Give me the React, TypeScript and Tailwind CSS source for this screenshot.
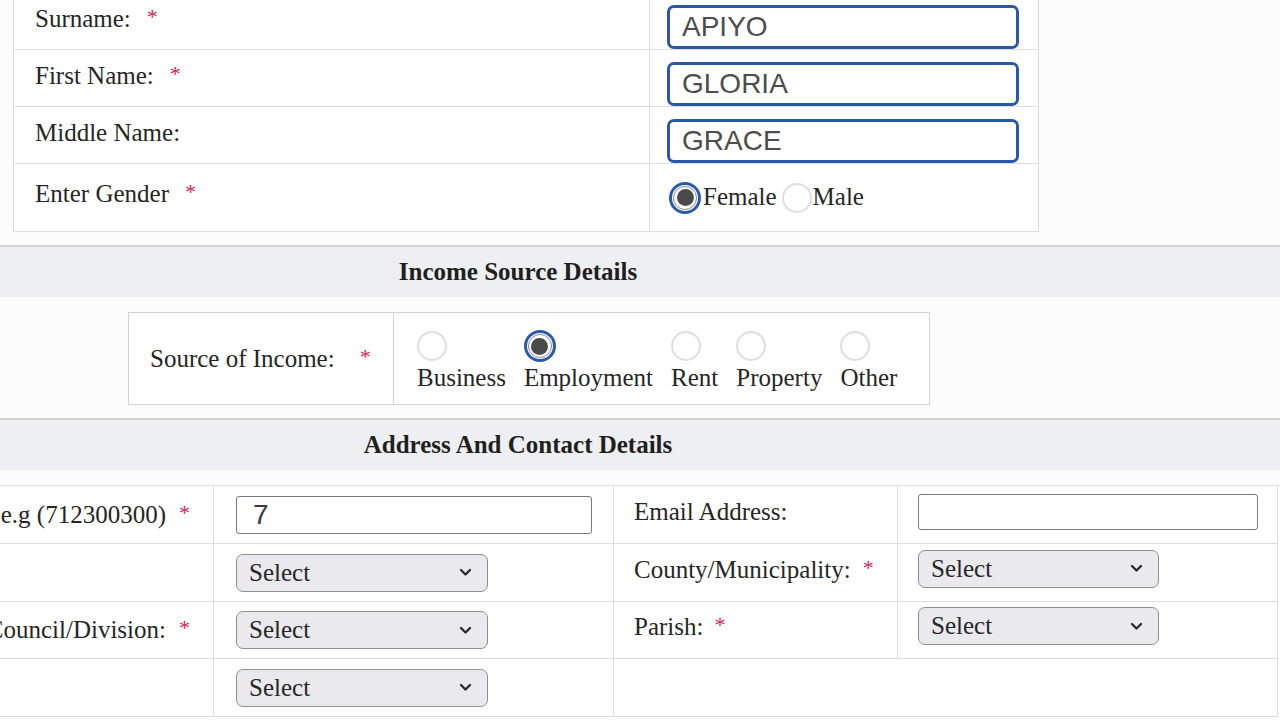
import React from "react";

const SERIF = "font-['Liberation_Serif','Times_New_Roman',serif]";

function Star({ gap = "ml-[16px]" }: { gap?: string }) {
  return <span className={`${gap} relative top-[-2px] text-[#d3235a] text-[22px] leading-none`}>*</span>;
}

function Radio({ checked = false }: { checked?: boolean }) {
  if (checked) {
    return (
      <span className="block w-[32px] h-[32px] rounded-full border-[3px] border-[#2c5aa9] bg-white flex items-center justify-center shrink-0">
        <span className="w-[24px] h-[24px] rounded-full border-[1px] border-[#8a8a8a] bg-white flex items-center justify-center">
          <span className="block w-[17px] h-[17px] rounded-full bg-[#4a4a4a]" />
        </span>
      </span>
    );
  }
  return <span className="block w-[30px] h-[30px] rounded-full border-2 border-[#dedede] bg-white shrink-0" />;
}

function Chevron() {
  return (
    <svg width="13" height="9" viewBox="0 0 13 9" fill="none">
      <polyline points="2,2 6.5,6.5 11,2" stroke="#2a2a2a" strokeWidth="2.3" strokeLinecap="round" strokeLinejoin="round" />
    </svg>
  );
}

function SelectBox({ width = "w-[252px]" }: { width?: string }) {
  return (
    <div className={`${width} h-[38px] rounded-[7px] bg-[#e9e9ee] border border-[#8f8f8f] flex items-center justify-between pl-[12px] pr-[15px]`}>
      <span className="text-[25px] text-[#262626]">Select</span>
      <Chevron />
    </div>
  );
}

function NameRow({ label, value, required }: { label: string; value: string; required?: boolean }) {
  return (
    <div className="flex h-[57px] border-b border-[#dcdcdc]">
      <div className="w-[636px] border-r border-[#dcdcdc] flex items-center pl-[21px] pb-[4px]">
        <span>{label}</span>
        {required && <Star />}
      </div>
      <div className="flex-1 flex items-start pt-[12px] pl-[17px]">
        <input
          readOnly
          value={value}
          className="w-[352px] h-[44px] border-[3px] border-[#2b58a6] rounded-[7px] bg-white pl-[12px] font-['Liberation_Sans',Arial,sans-serif] text-[28px] text-[#4d4d4d] outline-none"
        />
      </div>
    </div>
  );
}

function Band({ title }: { title: string }) {
  return (
    <div className="border-t-2 border-[#d3d3d3] bg-[#eeeff2] h-[52px] flex items-center">
      <div className="w-[1036px] text-center font-bold text-[25px] text-[#1f1f1f]">{title}</div>
    </div>
  );
}

const SOURCES = [
  { label: "Business", checked: false },
  { label: "Employment", checked: true },
  { label: "Rent", checked: false },
  { label: "Property", checked: false },
  { label: "Other", checked: false },
];

export default function App() {
  const cell = "border-r border-b border-[#dcdcdc] flex items-center";
  return (
    <div className={`${SERIF} w-[1280px] h-[720px] overflow-hidden bg-[#fcfcfc] text-[25px] text-[#262626]`}>
      {/* personal details */}
      <div className="ml-[13px] w-[1026px] mt-[-7px] border-x border-[#dcdcdc] bg-white">
        <NameRow label="Surname:" value="APIYO" required />
        <NameRow label="First Name:" value="GLORIA" required />
        <NameRow label="Middle Name:" value="GRACE" />
        <div className="flex h-[68px] border-b border-[#dcdcdc]">
          <div className="w-[636px] border-r border-[#dcdcdc] flex items-center pl-[21px] pb-[8px]">
            <span>Enter Gender</span>
            <Star gap="ml-[16px]" />
          </div>
          <div className="flex-1 flex items-center pl-[19px]">
            <Radio checked />
            <span className="ml-[2px] mb-[2px]">Female</span>
            <span className="ml-[5px]">
              <Radio />
            </span>
            <span className="ml-[1px] mb-[2px]">Male</span>
          </div>
        </div>
      </div>

      {/* income */}
      <div className="mt-[13px]">
        <Band title="Income Source Details" />
      </div>
      <div className="pt-[15px] pb-[13px]">
        <div className="ml-[128px] w-[802px] h-[93px] border border-[#d2d2d2] bg-white flex">
          <div className="w-[265px] border-r border-[#d2d2d2] flex items-center pl-[21px]">
            <span>Source of Income:</span>
            <Star gap="ml-[25px]" />
          </div>
          <div className="flex-1 flex gap-[18px] pl-[23px] pt-[17px]">
            {SOURCES.map((s) => (
              <div key={s.label} className="flex flex-col items-start">
                <span className="h-[32px] flex items-center">
                  <Radio checked={s.checked} />
                </span>
                <span className="mt-[-3px]">{s.label}</span>
              </div>
            ))}
          </div>
        </div>
      </div>

      {/* address */}
      <Band title="Address And Contact Details" />
      <div className="pt-[15px]">
        <div className="ml-[-240px] grid grid-cols-[453px_400px_284px_380px] grid-rows-[58px_58px_57px_58px] border-t border-l border-[#dcdcdc] bg-white">
          <div className={`${cell} justify-end pr-[23px] whitespace-nowrap`}>
            <span>e.g (712300300)</span>
            <Star gap="ml-[13px]" />
          </div>
          <div className={`${cell} pl-[22px]`}>
            <input
              readOnly
              value="7"
              className="w-[356px] h-[38px] border-[1.5px] border-[#7a7a7a] rounded-[3px] bg-white px-[16px] font-['Liberation_Sans',Arial,sans-serif] text-[28px] text-[#3a3a3a] outline-none"
            />
          </div>
          <div className={`${cell} pl-[20px] pb-[5px]`}>Email Address:</div>
          <div className={`${cell} pl-[20px] pb-[6px]`}>
            <input readOnly className="w-[340px] h-[36px] border-[1.5px] border-[#7a7a7a] rounded-[3px] bg-white outline-none" />
          </div>

          <div className={cell} />
          <div className={`${cell} pl-[22px]`}>
            <SelectBox />
          </div>
          <div className={`${cell} pl-[20px] pb-[6px]`}>
            <span>County/Municipality:</span>
            <Star gap="ml-[12px]" />
          </div>
          <div className={`${cell} pl-[20px] pb-[8px]`}>
            <SelectBox width="w-[241px]" />
          </div>

          <div className={`${cell} justify-end pr-[23px] whitespace-nowrap`}>
            <span>Sub County/Town Council/Division:</span>
            <Star gap="ml-[13px]" />
          </div>
          <div className={`${cell} pl-[22px]`}>
            <SelectBox />
          </div>
          <div className={`${cell} pl-[20px] pb-[6px]`}>
            <span>Parish:</span>
            <Star gap="ml-[11px]" />
          </div>
          <div className={`${cell} pl-[20px] pb-[8px]`}>
            <SelectBox width="w-[241px]" />
          </div>

          <div className={cell} />
          <div className={`${cell} pl-[22px]`}>
            <SelectBox />
          </div>
          <div className={`${cell} col-span-2`} />
        </div>
      </div>
    </div>
  );
}
